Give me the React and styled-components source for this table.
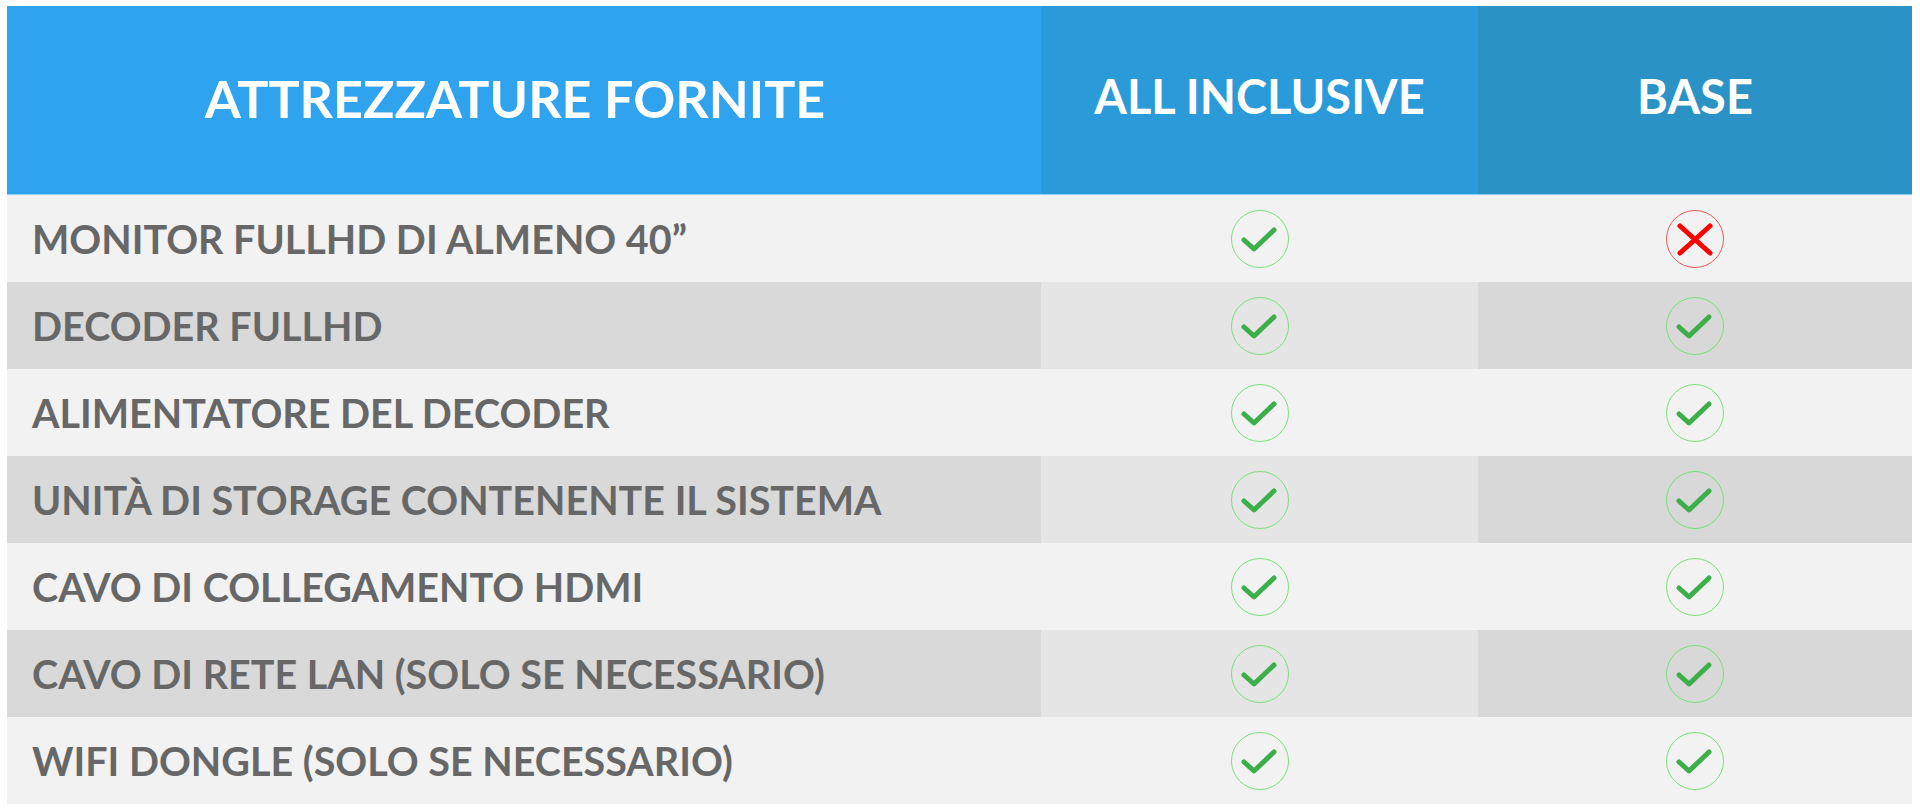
import React from "react";
import styled, { createGlobalStyle } from "styled-components";

const Global = createGlobalStyle`
  html, body { margin: 0; padding: 0; background: #ffffff; }
  body { font-family: Lato, "Open Sans", Arial, sans-serif; }
`;

const Page = styled.div`
  padding: 6px 8px 0 7px;
  width: 1920px;
  height: 811px;
  box-sizing: border-box;
`;

const Table = styled.div`
  display: grid;
  grid-template-columns: 1034px 437px 1fr;
  grid-template-rows: 189px repeat(7, 87px);
`;

const headBg = ["#2fa3ee", "#2b9ad9", "#2a92c4"];

const HeadCell = styled.div`
  background: ${(p) => headBg[p.$col]};
  border-bottom: 1px solid #8fcdf2;
  box-sizing: border-box;
  display: flex;
  align-items: center;
  justify-content: center;
  color: #ffffff;
  font-family: Lato, sans-serif;
  font-weight: 700;
  font-size: ${(p) => (p.$col === 0 ? "52px" : "47px")};
  padding-bottom: ${(p) => (p.$col === 0 ? "4px" : "8px")};
  padding-right: ${(p) => (p.$col === 0 ? "18px" : "0")};
  white-space: nowrap;
`;

const evenBg = ["#d9d9d9", "#e5e5e5", "#d8d8d8"];

const Cell = styled.div`
  background: ${(p) => (p.$even ? evenBg[p.$col] : "#f2f2f2")};
  display: flex;
  align-items: center;
  justify-content: ${(p) => (p.$col === 0 ? "flex-start" : "center")};
  padding-left: ${(p) => (p.$col === 0 ? "25px" : "0")};
`;

const Label = styled.span`
  font-family: Lato, sans-serif;
  font-weight: 700;
  font-size: 39.5px;
  color: #676767;
  white-space: nowrap;
`;

const Yes = () => (
  <svg width="60" height="60" viewBox="-30 -30 60 60">
    <circle cx="0" cy="0" r="28.5" fill="none" stroke="#7be07b" strokeWidth="1" />
    <polyline
      points="-16,1 -6,10 14,-9"
      fill="none"
      stroke="#3cae4a"
      strokeWidth="5"
      strokeLinecap="round"
      strokeLinejoin="round"
    />
  </svg>
);

const No = () => (
  <svg width="60" height="60" viewBox="-30 -30 60 60">
    <circle cx="0" cy="0" r="28.5" fill="none" stroke="#ec5a5a" strokeWidth="1" />
    <path
      d="M-15,-13 L15,14 M15,-13 L-15,14"
      fill="none"
      stroke="#ff0000"
      strokeWidth="5"
      strokeLinecap="round"
    />
  </svg>
);

const rows = [
  ["MONITOR FULLHD DI ALMENO 40\u201D", true, false],
  ["DECODER FULLHD", true, true],
  ["ALIMENTATORE DEL DECODER", true, true],
  ["UNITÀ DI STORAGE CONTENENTE IL SISTEMA", true, true],
  ["CAVO DI COLLEGAMENTO HDMI", true, true],
  ["CAVO DI RETE LAN (SOLO SE NECESSARIO)", true, true],
  ["WIFI DONGLE (SOLO SE NECESSARIO)", true, true],
];

export default function App() {
  return (
    <>
      <Global />
      <Page>
        <Table>
          <HeadCell $col={0}>ATTREZZATURE FORNITE</HeadCell>
          <HeadCell $col={1}>ALL INCLUSIVE</HeadCell>
          <HeadCell $col={2}>BASE</HeadCell>
          {rows.map(([label, a, b], i) => {
            const even = i % 2 === 1;
            return (
              <React.Fragment key={label}>
                <Cell $col={0} $even={even}>
                  <Label>{label}</Label>
                </Cell>
                <Cell $col={1} $even={even}>{a ? <Yes /> : <No />}</Cell>
                <Cell $col={2} $even={even}>{b ? <Yes /> : <No />}</Cell>
              </React.Fragment>
            );
          })}
        </Table>
      </Page>
    </>
  );
}
